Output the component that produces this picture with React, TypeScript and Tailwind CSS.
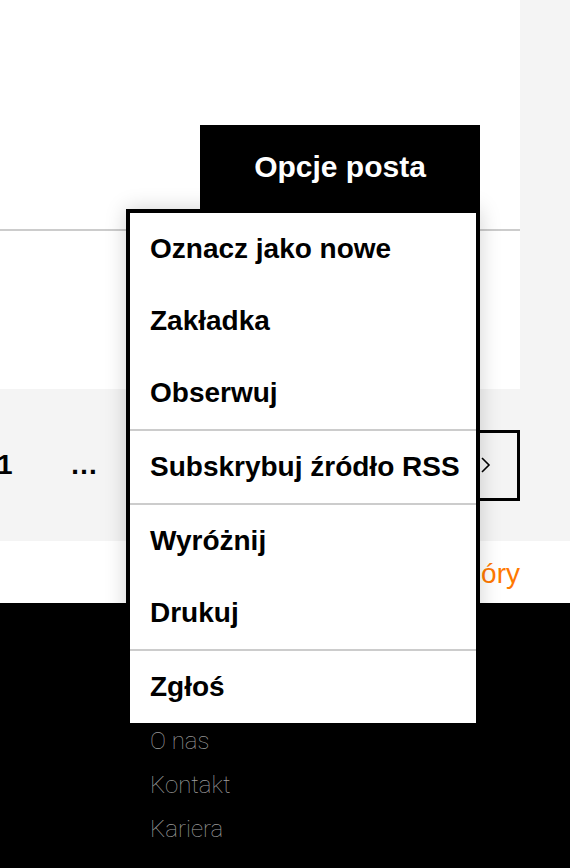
const menuGroups = [
  ["Oznacz jako nowe", "Zakładka", "Obserwuj"],
  ["Subskrybuj źródło RSS"],
  ["Wyróżnij", "Drukuj"],
  ["Zgłoś"],
];

const footerLinks = ["O nas", "Kontakt", "Kariera"];

function PostOptions() {
  return (
    <div className="relative">
      <button className="flex h-[84px] w-[280px] items-center justify-center bg-black pb-[2px] text-[30px] font-bold text-white">
        Opcje posta
      </button>
      <div className="absolute right-0 top-full z-10 w-[354px] border-4 border-black bg-white shadow-[0_0_20px_rgba(0,0,0,0.18)]">
        {menuGroups.map((group, i) => (
          <div key={i} className={i > 0 ? "border-t-2 border-[#cccccc]" : ""}>
            {group.map((label) => (
              <div key={label} className="flex h-[72px] items-center pl-5 text-[28px] font-bold text-black">
                {label}
              </div>
            ))}
          </div>
        ))}
      </div>
    </div>
  );
}

export default function App() {
  return (
    <div className="min-h-[868px] w-[570px] overflow-hidden bg-[#f4f4f4] font-['Liberation_Sans',Arial,sans-serif]">
      <div className="flex h-[389px] w-[520px] flex-col bg-white">
        <div className="flex justify-end pr-10 pt-[125px]">
          <PostOptions />
        </div>
        <div className="mt-5 h-[2px] bg-[#cccccc]" />
      </div>

      <div className="flex h-[152px] w-[520px] items-center text-[28px] font-bold text-black">
        <span className="-ml-[3px] w-[73px]">1</span>
        <span>…</span>
        <button className="ml-auto flex h-[71px] w-[71px] items-center justify-center border-[3px] border-black">
          <svg width="11" height="16" viewBox="0 0 11 16" fill="none" stroke="black" strokeWidth="1.6" className="ml-[2px]">
            <path d="M2 1l7 7-7 7" />
          </svg>
        </button>
      </div>

      <div className="flex h-[62px] items-center bg-white">
        <div className="flex w-[520px] justify-end pt-1 text-[28px] text-[#ff7900]">Do góry</div>
      </div>

      <footer className="flex min-h-[265px] flex-col bg-black pl-[150px] pt-[116px] font-['Roboto',sans-serif] text-[24px] font-thin text-[#a0a0a0]">
        {footerLinks.map((link) => (
          <a key={link} className="leading-[44px]">
            {link}
          </a>
        ))}
      </footer>
    </div>
  );
}
